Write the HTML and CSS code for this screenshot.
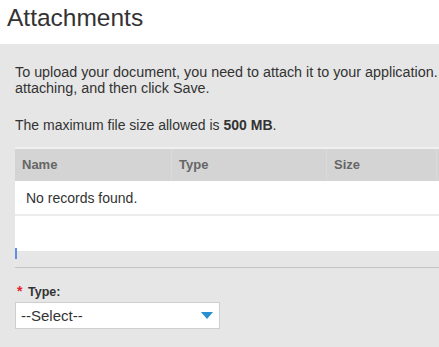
FILE: index.html
```html
<!DOCTYPE html>
<html>
<head>
<meta charset="utf-8">
<link rel="stylesheet" href="styles.css">
</head>
<body>
<header class="page-header">
  <h1 class="title">Attachments</h1>
</header>
<main class="content">
  <p class="intro">To upload your document, you need to attach it to your application. Browse for the document, click attaching, and then click Save.</p>
  <p class="limit">The maximum file size allowed is <strong>500 MB</strong>.</p>
  <div class="grid">
    <div class="grid-head">
      <div class="col col-name">Name</div>
      <div class="col col-type">Type</div>
      <div class="col col-size">Size</div>
      <div class="col col-rest"></div>
    </div>
    <div class="grid-row">No records found.</div>
    <div class="grid-empty"></div>
  </div>
  <div class="caret-strip"><span class="caret"></span></div>
  <div class="form-field">
    <label class="label"><span class="req">*</span><span class="label-text">Type:</span></label>
    <div class="select">
      <span class="select-text">--Select--</span>
      <svg class="select-arrow" width="12" height="7" viewBox="0 0 12 7"><polygon points="0,0 12,0 6,7" fill="#2a8fd0"/></svg>
    </div>
  </div>
</main>
</body>
</html>
```
FILE: styles.css
```css
html, body {
  margin: 0;
  padding: 0;
}
body {
  width: 439px;
  height: 347px;
  overflow: hidden;
  font-family: "Liberation Sans", Arial, sans-serif;
  color: #333;
  background: #e6e6e6;
}
.page-header {
  background: #fff;
  height: 44px;
  box-sizing: border-box;
  padding: 3px 0 0 7px;
}
.title {
  margin: 0;
  font-weight: normal;
  font-size: 24.5px;
  line-height: 30px;
  color: #333;
}
.content {
  width: 439px;
  overflow: hidden;
  box-sizing: border-box;
  padding: 20px 0 0 15px;
  font-size: 14px;
  line-height: 16px;
}
.intro {
  margin: 0;
  width: 660px;
  font-size: 14.35px;
}
.limit {
  margin: 21px 0 0;
}
.grid {
  margin-top: 14px;
  width: 520px;
  border-top: 2px solid #f0f0f0;
}
.grid-head {
  display: flex;
  background: #d4d4d4;
  height: 32px;
  align-items: stretch;
}
.col {
  display: flex;
  align-items: center;
  padding-left: 7px;
  font-size: 13px;
  font-weight: bold;
  color: #666;
  box-sizing: border-box;
  border-right: 1px solid #dadada;
}
.col-name { width: 157px; }
.col-type { width: 155px; }
.col-size { width: 110px; }
.col-rest { flex: 1; border-right: none; }
.grid-row {
  background: #fff;
  height: 33px;
  display: flex;
  align-items: center;
  padding-left: 11px;
  border-bottom: 2px solid #ececec;
}
.grid-empty {
  background: #fff;
  height: 35px;
}
.caret-strip {
  height: 16px;
  border-bottom: 1px solid #c4c4c4;
  display: flex;
  align-items: flex-start;
}
.caret {
  display: block;
  width: 2px;
  height: 11px;
  margin-top: -3px;
  background: #5b8fe0;
}
.form-field {
  margin-top: 17px;
}
.label {
  display: flex;
  align-items: flex-start;
  font-weight: bold;
  font-size: 12.5px;
  line-height: 15px;
  padding-left: 2px;
}
.req {
  color: #e0242b;
  font-size: 14px;
  line-height: 12px;
  width: 11px;
}
.label-text {
  color: #333;
}
.select {
  margin-top: 2px;
  width: 205px;
  height: 27px;
  box-sizing: border-box;
  background: #fff;
  border: 1px solid #cfcfcf;
  display: flex;
  align-items: center;
  justify-content: space-between;
  padding: 0 6px 0 5px;
  font-size: 15px;
}
.select-text {
  color: #333;
}
```
